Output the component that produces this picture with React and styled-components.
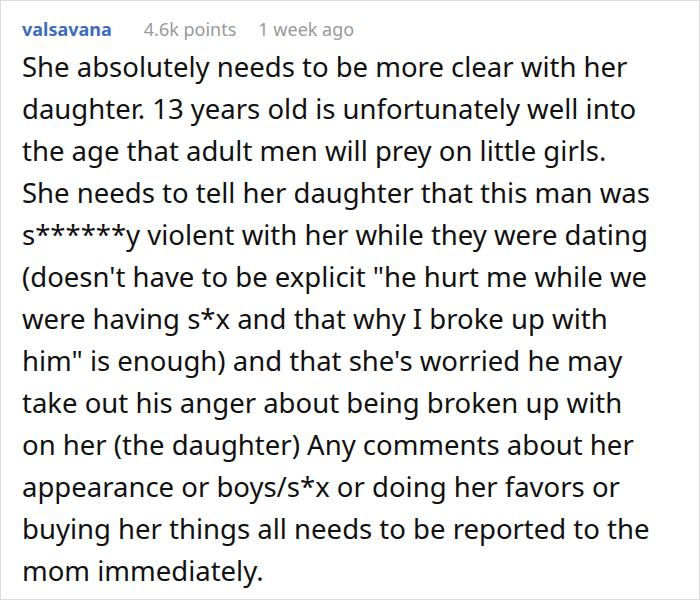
import React from 'react'
import styled, { createGlobalStyle } from 'styled-components'

const GlobalStyle = createGlobalStyle`
  html, body {
    margin: 0;
    padding: 0;
    background: #fff;
  }
`

const Card = styled.div`
  box-sizing: border-box;
  width: 700px;
  height: 600px;
  border: 1px solid #dcdcdc;
  padding: 16px 45px 0 21px;
  font-family: 'Noto Sans', 'Open Sans', sans-serif;
  background: #fff;
  overflow: hidden;
`

const Meta = styled.div`
  display: flex;
  align-items: baseline;
  font-size: 18px;
  line-height: 24px;
`

const Author = styled.span`
  color: #3c6cba;
  font-weight: 700;
  margin-right: 32px;
`

const Info = styled.span`
  color: #999;
  margin-right: ${p => p.$gap || 0}px;
`

const Body = styled.p`
  margin: 5px 0 0;
  color: #111;
  font-size: 27.5px;
  line-height: 42px;
`

const comment =
  'She absolutely needs to be more clear with her daughter. 13 years old is unfortunately well into the age that adult men will prey on little girls. She needs to tell her daughter that this man was s******y violent with her while they were dating (doesn\'t have to be explicit "he hurt me while we were having s*x and that why I broke up with him" is enough) and that she\'s worried he may take out his anger about being broken up with on her (the daughter) Any comments about her appearance or boys/s*x or doing her favors or buying her things all needs to be reported to the mom immediately.'

const App = () => {
  return (
    <>
      <GlobalStyle />
      <Card>
        <Meta>
          <Author>valsavana</Author>
          <Info $gap={22}>4.6k points</Info>
          <Info>1 week ago</Info>
        </Meta>
        <Body>{comment}</Body>
      </Card>
    </>
  )
}

export default App
